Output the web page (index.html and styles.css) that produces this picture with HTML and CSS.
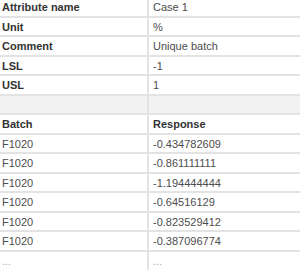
FILE: index.html
```html
<!DOCTYPE html>
<html>
<head>
<meta charset="utf-8">
<link rel="stylesheet" href="styles.css">
</head>
<body>
<div class="sheet">
  <div class="row"><div class="cell label">Attribute name</div><div class="cell value">Case 1</div></div>
  <div class="row"><div class="cell label">Unit</div><div class="cell value">%</div></div>
  <div class="row"><div class="cell label">Comment</div><div class="cell value">Unique batch</div></div>
  <div class="row"><div class="cell label">LSL</div><div class="cell value">-1</div></div>
  <div class="row"><div class="cell label">USL</div><div class="cell value">1</div></div>
  <div class="row spacer"><div class="cell"></div><div class="cell"></div></div>
  <div class="row"><div class="cell label">Batch</div><div class="cell label">Response</div></div>
  <div class="row"><div class="cell value">F1020</div><div class="cell value">-0.434782609</div></div>
  <div class="row"><div class="cell value">F1020</div><div class="cell value">-0.861111111</div></div>
  <div class="row"><div class="cell value">F1020</div><div class="cell value">-1.194444444</div></div>
  <div class="row"><div class="cell value">F1020</div><div class="cell value">-0.64516129</div></div>
  <div class="row"><div class="cell value">F1020</div><div class="cell value">-0.823529412</div></div>
  <div class="row"><div class="cell value">F1020</div><div class="cell value">-0.387096774</div></div>
  <div class="row more"><div class="cell muted">...</div><div class="cell muted">...</div></div>
</div>
</body>
</html>
```
FILE: styles.css
```css
html, body {
  margin: 0;
  padding: 0;
  background: #ffffff;
}
body {
  width: 300px;
  height: 270px;
  overflow: hidden;
}
.sheet {
  margin: -2px 0 0 -3px;
  width: 310px;
  font-family: "Liberation Sans", Arial, sans-serif;
  font-size: 11px;
}
.row {
  display: grid;
  grid-template-columns: 150px 1fr;
  height: 19.5px;
  box-sizing: border-box;
  border-bottom: 2px solid #e3e3e3;
}
.cell {
  padding: 0 5px;
  line-height: 18px;
  white-space: nowrap;
  overflow: hidden;
}
.cell + .cell {
  border-left: 2px solid #e3e3e3;
  padding-left: 4px;
}
.label {
  font-weight: bold;
  color: #333333;
}
.value {
  color: #4d4d4d;
}
.muted {
  color: #aaaaaa;
}
.spacer {
  background: #f2f2f2;
}
.more {
  height: 22px;
  border-bottom: none;
}
```
